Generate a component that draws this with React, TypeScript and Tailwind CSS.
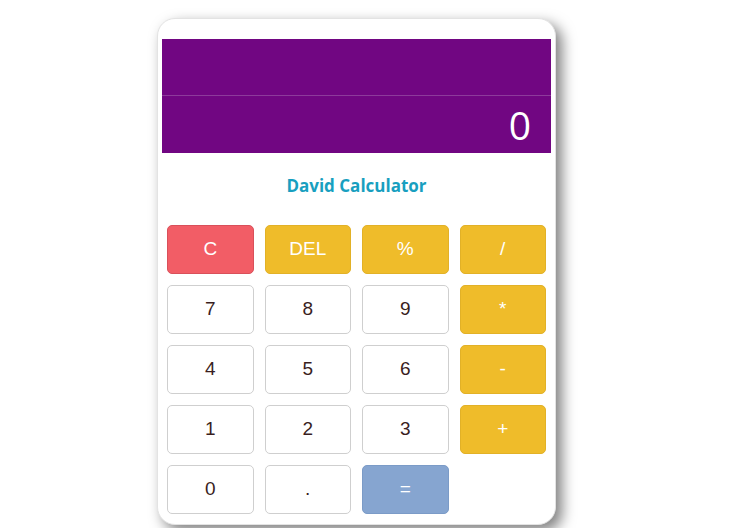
import React from 'react';

type Key = { label: string; kind: 'clear' | 'op' | 'num' | 'eq' };

const keys: Key[] = [
  { label: 'C', kind: 'clear' },
  { label: 'DEL', kind: 'op' },
  { label: '%', kind: 'op' },
  { label: '/', kind: 'op' },
  { label: '7', kind: 'num' },
  { label: '8', kind: 'num' },
  { label: '9', kind: 'num' },
  { label: '*', kind: 'op' },
  { label: '4', kind: 'num' },
  { label: '5', kind: 'num' },
  { label: '6', kind: 'num' },
  { label: '-', kind: 'op' },
  { label: '1', kind: 'num' },
  { label: '2', kind: 'num' },
  { label: '3', kind: 'num' },
  { label: '+', kind: 'op' },
  { label: '0', kind: 'num' },
  { label: '.', kind: 'num' },
  { label: '=', kind: 'eq' },
];

const styles: Record<Key['kind'], string> = {
  clear: 'bg-[#f25d66] border-[#d9505a] text-white',
  op: 'bg-[#efbc2a] border-[#e2b127] text-white',
  num: 'bg-white border-[#cfcfcf] text-[#3a1e1e]',
  eq: 'bg-[#86a5d0] border-[#7b9bc7] text-white',
};

export default function App() {
  return (
    <div className="min-h-[528px] w-full bg-white pt-[18px] pl-[157px]">
      <div className="w-[399px] rounded-[18px] border border-[#e3e3e3] bg-white pt-[20px] pb-[10px] shadow-[6px_6px_14px_rgba(0,0,0,0.5)]">
        <div className="mx-[4px] bg-[#710682] font-['Open_Sans',sans-serif] text-white">
          <div className="h-[57px] border-b border-[#8d3a9b]" />
          <div className="flex h-[57px] items-center justify-end pr-[20px] text-[39px] leading-none">0</div>
        </div>

        <div className="flex h-[61px] items-center justify-center pt-[4px] font-['Open_Sans',sans-serif] text-[17px] font-bold text-[#189fc0]">
          David Calculator
        </div>

        <div className="grid grid-cols-[repeat(4,86.5px)] gap-x-[11px] gap-y-[11px] pt-[11px] pl-[9px] font-['Liberation_Sans',Arial,sans-serif] text-[19px]">
          {keys.map((k) => (
            <button
              key={k.label}
              className={`flex h-[49px] items-center justify-center rounded-[5px] border ${styles[k.kind]}`}
            >
              {k.label}
            </button>
          ))}
        </div>
      </div>
    </div>
  );
}
